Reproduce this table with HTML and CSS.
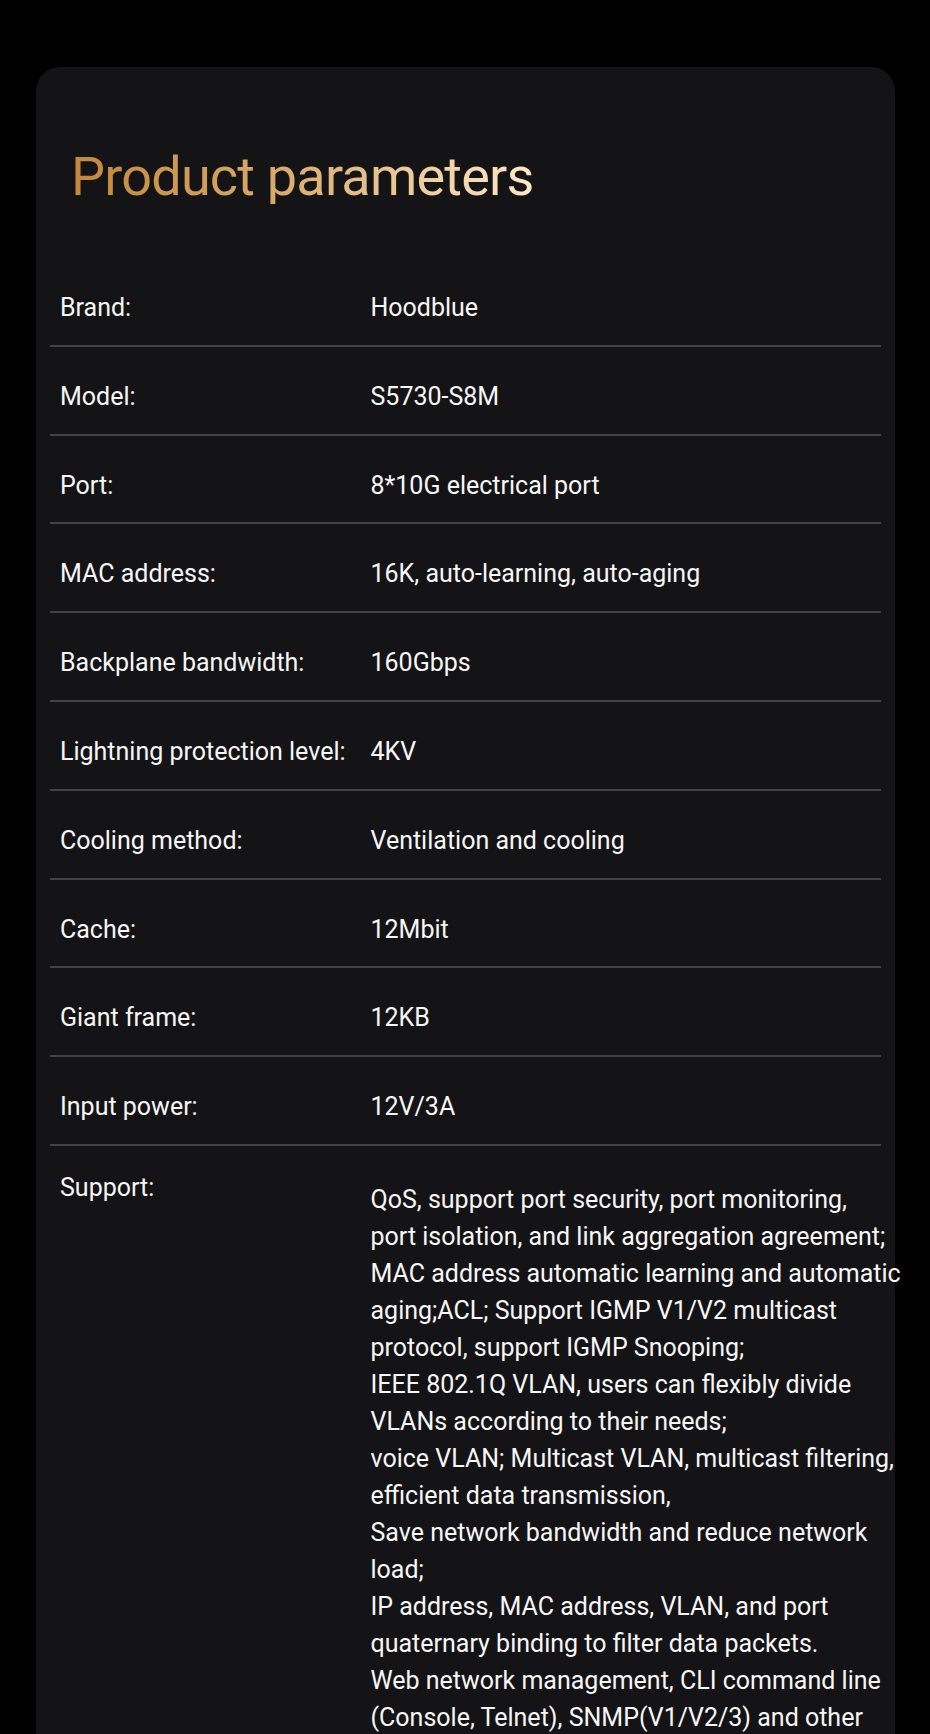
FILE: index.html
```html
<!DOCTYPE html>
<html lang="en">
<head>
    <meta charset="UTF-8">
    <meta name="viewport" content="width=device-width, initial-scale=1.0">
    <title>Product parameters</title>
    <link rel="stylesheet" href="styles.css">
</head>
<body>
    <div class="card">
        <h1 class="title">Product parameters</h1>

        <div class="params">
            <div class="row">
                <div class="label">Brand:</div>
                <div class="value">Hoodblue</div>
            </div>
            <div class="row">
                <div class="label">Model:</div>
                <div class="value">S5730-S8M</div>
            </div>
            <div class="row">
                <div class="label">Port:</div>
                <div class="value">8*10G electrical port</div>
            </div>
            <div class="row">
                <div class="label">MAC address:</div>
                <div class="value">16K, auto-learning, auto-aging</div>
            </div>
            <div class="row">
                <div class="label">Backplane bandwidth:</div>
                <div class="value">160Gbps</div>
            </div>
            <div class="row">
                <div class="label">Lightning protection level:</div>
                <div class="value">4KV</div>
            </div>
            <div class="row">
                <div class="label">Cooling method:</div>
                <div class="value">Ventilation and cooling</div>
            </div>
            <div class="row">
                <div class="label">Cache:</div>
                <div class="value">12Mbit</div>
            </div>
            <div class="row">
                <div class="label">Giant frame:</div>
                <div class="value">12KB</div>
            </div>
            <div class="row">
                <div class="label">Input power:</div>
                <div class="value">12V/3A</div>
            </div>
            <div class="row row-long">
                <div class="label">Support:</div>
                <div class="value value-long">
                    QoS, support port security, port monitoring,<br>
                    port isolation, and link aggregation agreement;<br>
                    MAC address automatic learning and automatic<br>
                    aging;ACL; Support IGMP V1/V2 multicast<br>
                    protocol, support IGMP Snooping;<br>
                    IEEE 802.1Q VLAN, users can flexibly divide<br>
                    VLANs according to their needs;<br>
                    voice VLAN; Multicast VLAN, multicast filtering,<br>
                    efficient data transmission,<br>
                    Save network bandwidth and reduce network<br>
                    load;<br>
                    IP address, MAC address, VLAN, and port<br>
                    quaternary binding to filter data packets.<br>
                    Web network management, CLI command line<br>
                    (Console, Telnet), SNMP(V1/V2/3) and other
                </div>
            </div>
        </div>
    </div>
</body>
</html>
```

FILE: styles.css
```css
body {
    margin: 0;
    background-color: #000;
    font-family: Roboto, "Liberation Sans", sans-serif;
    color: #f7f7f7;
}

.card {
    width: 859px;
    margin: 67px 0 0 36px;
    padding: 83px 14px 40px;
    box-sizing: border-box;
    background-color: #141416;
    border-radius: 24px;
}

.title {
    display: inline-block;
    margin: 0 0 54px 21px;
    font-size: 54px;
    font-weight: 400;
    line-height: 54px;
    letter-spacing: -0.8px;
    background: linear-gradient(90deg, #c2873a 0%, #d9aa6c 45%, #fde9c6 100%);
    -webkit-background-clip: text;
    background-clip: text;
    color: transparent;
}

.params {
    font-size: 25px;
    line-height: 30px;
}

.row {
    display: flex;
    height: 51.8px;
    padding: 35px 0 0 10px;
    border-bottom: 2px solid #434346;
}

.label {
    flex: 0 0 310.5px;
    white-space: nowrap;
}

.value {
    flex: 1;
    white-space: nowrap;
}

.row-long {
    height: auto;
    padding-top: 27px;
    border-bottom: none;
}

.value-long {
    margin-top: 8px;
    line-height: 37px;
}
```
